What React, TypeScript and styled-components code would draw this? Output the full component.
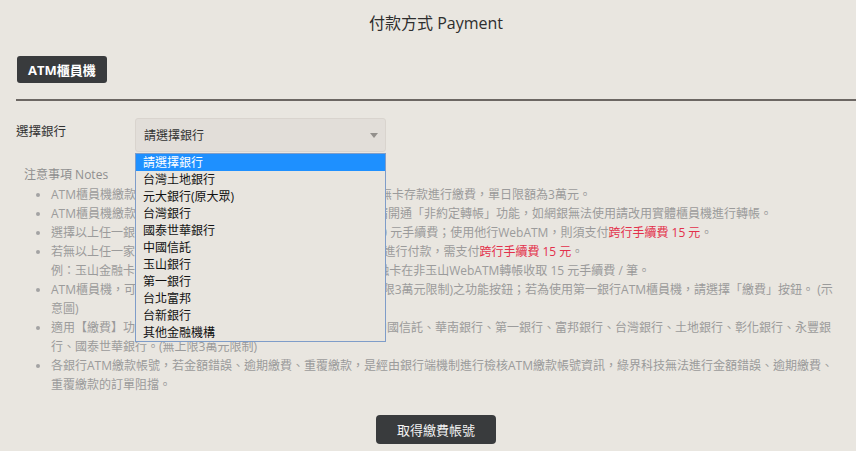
import React from "react";
import styled, { createGlobalStyle } from "styled-components";

const GlobalStyle = createGlobalStyle`
  html, body {
    margin: 0;
    padding: 0;
    background: #e9e6e0;
  }
  body {
    font-family: "Open Sans", "Noto Sans CJK TC", sans-serif;
  }
`;

const PageContainer = styled.div`
  min-height: 100vh;
  padding: 0 0 0 16px;
  background: #e9e6e0;
  color: #333;
  overflow: hidden;
`;

const Title = styled.h2`
  margin: 0;
  padding-top: 11px;
  height: 24px;
  line-height: 24px;
  text-align: center;
  font-size: 16px;
  font-weight: 400;
  color: #2e2e2e;
`;

const TabRow = styled.div`
  display: flex;
  margin-top: 21px;
  padding-left: 1px;
`;

const TabButton = styled.div`
  height: 27px;
  padding: 0 11px 0 11px;
  display: flex;
  align-items: center;
  background: #393b3d;
  color: #fff;
  font-size: 13px;
  font-weight: 700;
  border-radius: 3px;
`;

const Divider = styled.div`
  height: 2px;
  margin-top: 16px;
  background: #6c6763;
`;

const FormRow = styled.div`
  display: flex;
  margin-top: 17px;
`;

const FieldLabel = styled.div`
  width: 119px;
  padding-top: 3px;
  font-size: 12.5px;
  color: #333;
`;

const SelectWrap = styled.div`
  position: relative;
  width: 251px;
`;

const SelectBox = styled.div`
  height: 34px;
  box-sizing: border-box;
  padding: 0 7px 0 8px;
  display: flex;
  align-items: center;
  justify-content: space-between;
  background: #e2ded9;
  border: 1px solid #d9d4ce;
  border-radius: 3px;
  font-size: 12px;
  color: #333;
`;

const Caret = styled.span`
  width: 0;
  height: 0;
  border-left: 4px solid transparent;
  border-right: 4px solid transparent;
  border-top: 5px solid #93908c;
`;

const OptionList = styled.ul`
  position: absolute;
  top: 35px;
  left: 0;
  z-index: 5;
  width: 251px;
  box-sizing: border-box;
  margin: 0;
  padding: 0;
  list-style: none;
  background: #e8e5df;
  border: 1px solid #7f9dc9;
`;

const OptionItem = styled.li<{ $active?: boolean }>`
  height: 17px;
  line-height: 17px;
  padding-left: 7px;
  font-size: 12px;
  color: ${(p) => (p.$active ? "#fff" : "#111")};
  background: ${(p) => (p.$active ? "#1e90ff" : "transparent")};
`;

const Notes = styled.div`
  margin: 13px 16px 0 8px;
  font-size: 12px;
  line-height: 19px;
  color: #9b9b9b;
`;

const NotesTitle = styled.div`
  color: #8f8f8f;
`;

const NoteList = styled.ul`
  margin: 1px 0 0;
  padding-left: 27px;
  list-style: disc;
  li::marker {
    color: #a3a3a3;
    font-size: 11px;
  }
`;

const Red = styled.span`
  color: #e3314b;
`;

const Footer = styled.div`
  display: flex;
  justify-content: center;
  margin-top: 21px;
`;

const SubmitButton = styled.div`
  width: 120px;
  height: 29px;
  display: flex;
  align-items: center;
  justify-content: center;
  background: #393b3d;
  color: #f2f2f2;
  font-size: 13px;
  border-radius: 4px;
`;

const banks = [
  "請選擇銀行",
  "台灣土地銀行",
  "元大銀行(原大眾)",
  "台灣銀行",
  "國泰世華銀行",
  "中國信託",
  "玉山銀行",
  "第一銀行",
  "台北富邦",
  "台新銀行",
  "其他金融機構",
];

export default function App() {
  return (
    <PageContainer>
      <GlobalStyle />
      <Title>付款方式 Payment</Title>

      <TabRow>
        <TabButton>ATM櫃員機</TabButton>
      </TabRow>

      <Divider />

      <FormRow>
        <FieldLabel>選擇銀行</FieldLabel>
        <SelectWrap>
          <SelectBox>
            <span>請選擇銀行</span>
            <Caret />
          </SelectBox>
          <OptionList>
            {banks.map((b, i) => (
              <OptionItem key={b} $active={i === 0}>
                {b}
              </OptionItem>
            ))}
          </OptionList>
        </SelectWrap>
      </FormRow>

      <Notes>
        <NotesTitle>注意事項 Notes</NotesTitle>
        <NoteList>
          <li>ATM櫃員機繳款時，若您的金融卡無法轉帳時，請至ATM選擇 無卡存款進行繳費，單日限額為3萬元。</li>
          <li>ATM櫃員機繳款若使用網路銀行轉帳時，您的網路銀行帳戶須請開通「非約定轉帳」功能，如網銀無法使用請改用實體櫃員機進行轉帳。</li>
          <li>
            選擇以上任一銀行的WebATM進行付款，同銀行帳戶轉帳免收 0 元手續費；使用他行WebATM，則須支付
            <Red>跨行手續費 15 元</Red>。
          </li>
          <li>
            若無以上任一家銀行之金融卡，則請改使用其他銀行 WebATM 進行付款，需支付<Red>跨行手續費 15 元</Red>。
            <br />
            例：玉山金融卡在玉山WebATM轉帳免收取手續費，而玉山金融卡在非玉山WebATM轉帳收取 15 元手續費 / 筆。
          </li>
          <li>ATM櫃員機，可選擇「繳費」或是「轉帳」 (轉帳功能有單筆上限3萬元限制)之功能按鈕；若為使用第一銀行ATM櫃員機，請選擇「繳費」按鈕。 (示意圖)</li>
          <li>適用【繳費】功能的銀行如下列：玉山銀行、國泰世華銀行、中國信託、華南銀行、第一銀行、富邦銀行、台灣銀行、土地銀行、彰化銀行、永豐銀行、國泰世華銀行。(無上限3萬元限制)</li>
          <li>各銀行ATM繳款帳號，若金額錯誤、逾期繳費、重覆繳款，是經由銀行端機制進行檢核ATM繳款帳號資訊，綠界科技無法進行金額錯誤、逾期繳費、重覆繳款的訂單阻擋。</li>
        </NoteList>
      </Notes>

      <Footer>
        <SubmitButton>取得繳費帳號</SubmitButton>
      </Footer>
    </PageContainer>
  );
}
